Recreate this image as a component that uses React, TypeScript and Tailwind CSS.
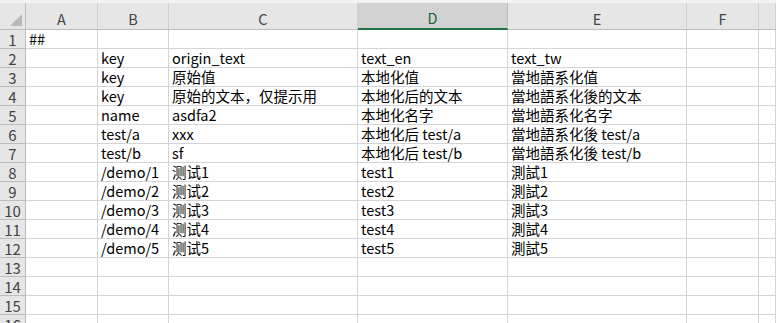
import React from "react";

const cols = ["A", "B", "C", "D", "E", "F", ""];
const widths = "grid-cols-[26px_72px_71px_189px_150px_179px_72px_1fr]";

const rows: string[][] = [
    ["##", "", "", "", "", "", ""],
    ["", "key", "origin_text", "text_en", "text_tw", "", ""],
    ["", "key", "原始值", "本地化值", "當地語系化值", "", ""],
    ["", "key", "原始的文本，仅提示用", "本地化后的文本", "當地語系化後的文本", "", ""],
    ["", "name", "asdfa2", "本地化名字", "當地語系化名字", "", ""],
    ["", "test/a", "xxx", "本地化后 test/a", "當地語系化後 test/a", "", ""],
    ["", "test/b", "sf", "本地化后 test/b", "當地語系化後 test/b", "", ""],
    ["", "/demo/1", "测试1", "test1", "測試1", "", ""],
    ["", "/demo/2", "测试2", "test2", "測試2", "", ""],
    ["", "/demo/3", "测试3", "test3", "測試3", "", ""],
    ["", "/demo/4", "测试4", "test4", "測試4", "", ""],
    ["", "/demo/5", "测试5", "test5", "測試5", "", ""],
    ["", "", "", "", "", "", ""],
    ["", "", "", "", "", "", ""],
    ["", "", "", "", "", "", ""],
];

export default function App() {
    return (
        <div
            lang="zh-CN"
            className="w-[776px] h-[323px] overflow-hidden bg-white text-[14.5px] text-black"
            style={{ fontFamily: '"Noto Sans CJK SC", "Noto Sans", sans-serif' }}
        >
            <div className="h-[3px] bg-[#f3f3f3]" />
            {/* column headers */}
            <div className={`grid ${widths} h-[27px] bg-[#e6e6e6] border-b border-[#bdbdbd]`}>
                <div className="relative border-r border-[#bdbdbd]">
                    <span className="absolute right-[3px] bottom-[3px] w-0 h-0 border-l-[12px] border-l-transparent border-b-[12px] border-b-[#b9b9b9]" />
                </div>
                {cols.map((c, i) =>
                    c === "D" ? (
                        <div key={i} className="flex items-end justify-center pb-[1px] bg-[#d2d2d2] border-r border-[#bdbdbd] border-b-2 border-b-[#217346] -mb-px text-[#1f5c38] leading-none">
                            <span className="mb-[2px]">{c}</span>
                        </div>
                    ) : (
                        <div key={i} className="flex items-end justify-center pb-[3px] border-r border-[#d0d0d0] text-[#444] leading-none">
                            {c}
                        </div>
                    )
                )}
            </div>
            {/* rows */}
            {rows.map((r, ri) => (
                <div key={ri} className={`grid ${widths} h-[19px]`}>
                    <div className="flex items-center justify-center bg-[#e6e6e6] border-r border-b border-[#bdbdbd] text-[#444] text-[15px] leading-none">
                        {ri + 1}
                    </div>
                    {r.map((v, ci) => (
                        <div key={ci} className="flex items-center pl-[3px] pt-[1px] border-r border-b border-[#d4d4d4] whitespace-nowrap leading-none">
                            {v}
                        </div>
                    ))}
                </div>
            ))}
            {/* row 16, cut off by the window */}
            <div className={`grid ${widths} h-[19px]`}>
                <div className="flex items-start justify-center pt-[2px] bg-[#e6e6e6] border-r border-[#bdbdbd] text-[#444] text-[15px] leading-none">
                    16
                </div>
                {cols.map((_, ci) => (
                    <div key={ci} className="border-r border-[#d4d4d4]" />
                ))}
            </div>
        </div>
    );
}
